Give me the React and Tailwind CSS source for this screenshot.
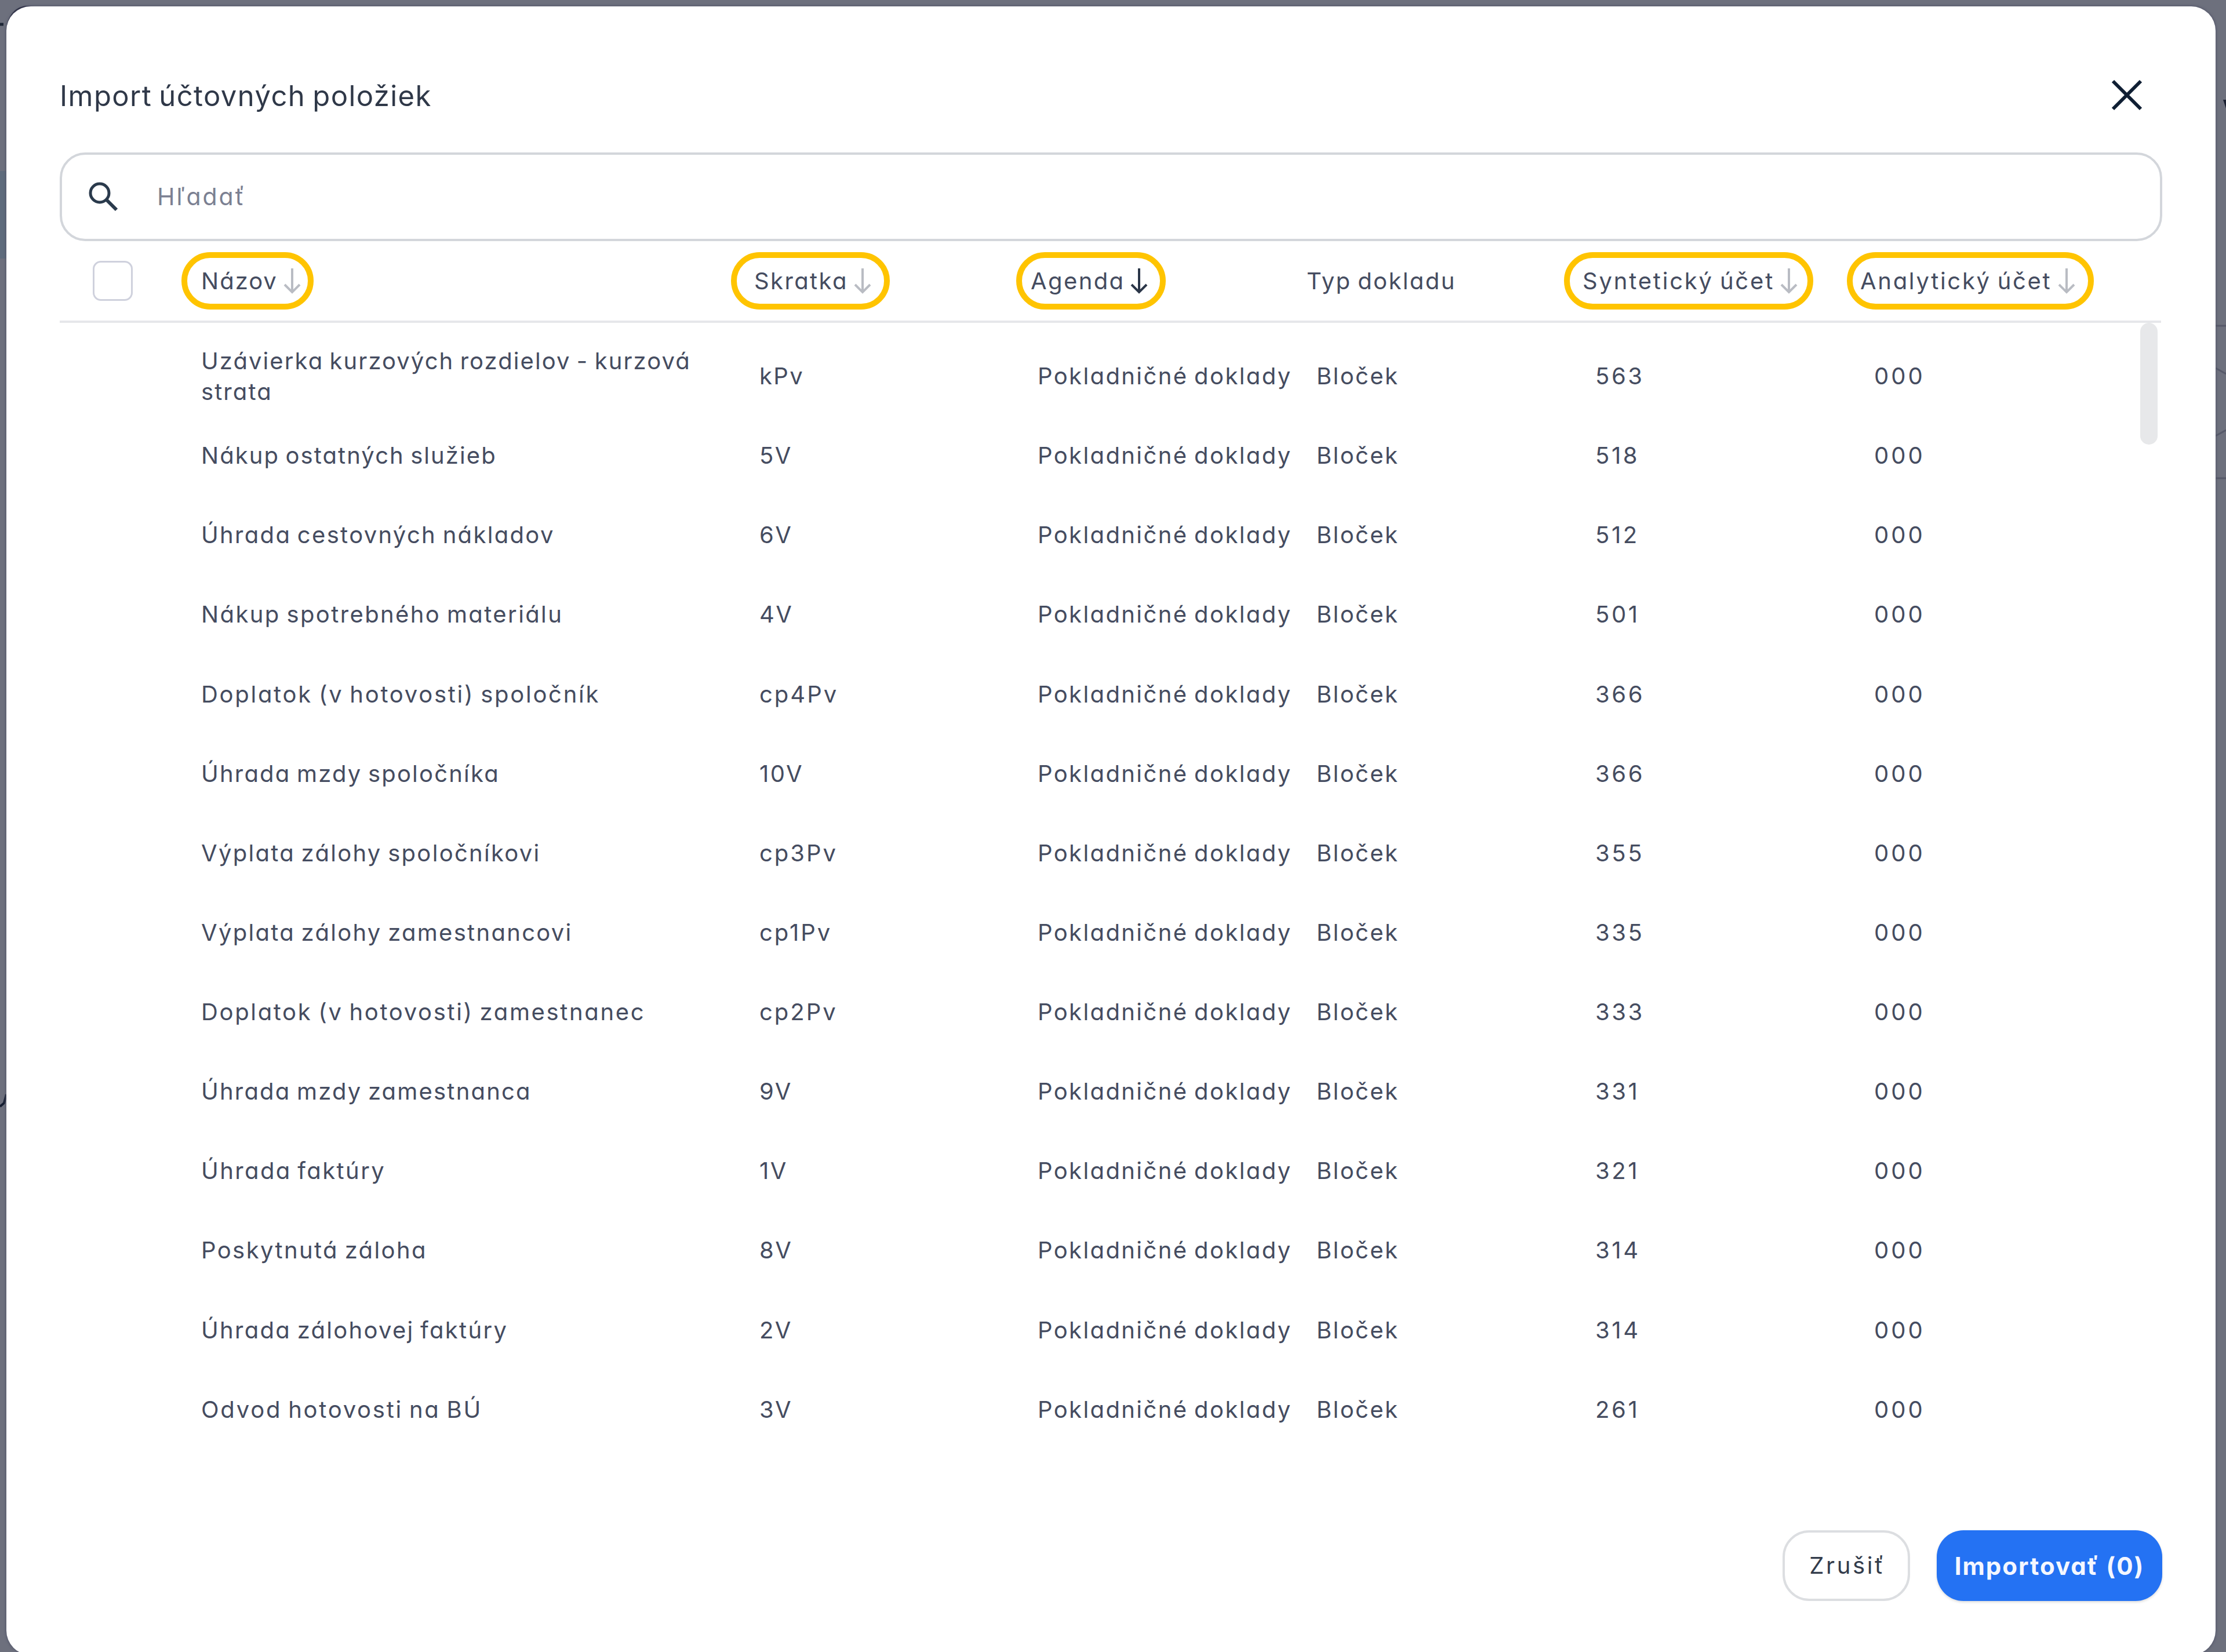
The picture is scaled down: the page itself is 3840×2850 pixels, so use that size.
import React from "react";

const columns = [
  { label: "Názov", pill: true, pos: "ml-[84px] w-[228px] pl-[24px] pr-[11px]", tracking: "tracking-[2px]" },
  { label: "Skratka", pill: true, pos: "ml-[720px] w-[274px] pl-[30px] pr-[21px]", tracking: "tracking-[2.4px]" },
  { label: "Agenda", pill: true, active: true, pos: "ml-[218px] w-[258px] pl-[15px] pr-[20px]", tracking: "tracking-[2.4px]" },
  { label: "Typ dokladu", pos: "ml-[243px] w-[258px]", tracking: "tracking-[2.4px]" },
  { label: "Syntetický účet", pill: true, pos: "ml-[186px] w-[430px] pl-[22px] pr-[16px]", tracking: "tracking-[2.8px]" },
  { label: "Analytický účet", pill: true, pos: "ml-[58px] w-[426px] pl-[13px] pr-[21px]", tracking: "tracking-[2.7px]" },
];

const rows = [
  { name: "Uzávierka kurzových rozdielov - kurzová strata", code: "kPv", account: "563", tracking: "tracking-[2.08px]" },
  { name: "Nákup ostatných služieb", code: "5V", account: "518", tracking: "tracking-[2.08px]" },
  { name: "Úhrada cestovných nákladov", code: "6V", account: "512", tracking: "tracking-[2.33px]" },
  { name: "Nákup spotrebného materiálu", code: "4V", account: "501", tracking: "tracking-[2.4px]" },
  { name: "Doplatok (v hotovosti) spoločník", code: "cp4Pv", account: "366", tracking: "tracking-[2.72px]" },
  { name: "Úhrada mzdy spoločníka", code: "10V", account: "366", tracking: "tracking-[2.2px]" },
  { name: "Výplata zálohy spoločníkovi", code: "cp3Pv", account: "355", tracking: "tracking-[2.3px]" },
  { name: "Výplata zálohy zamestnancovi", code: "cp1Pv", account: "335", tracking: "tracking-[2.3px]" },
  { name: "Doplatok (v hotovosti) zamestnanec", code: "cp2Pv", account: "333", tracking: "tracking-[2.65px]" },
  { name: "Úhrada mzdy zamestnanca", code: "9V", account: "331", tracking: "tracking-[2.2px]" },
  { name: "Úhrada faktúry", code: "1V", account: "321", tracking: "tracking-[2.4px]" },
  { name: "Poskytnutá záloha", code: "8V", account: "314", tracking: "tracking-[2.4px]" },
  { name: "Úhrada zálohovej faktúry", code: "2V", account: "314", tracking: "tracking-[2.3px]" },
  { name: "Odvod hotovosti na BÚ", code: "3V", account: "261", tracking: "tracking-[2.74px]" },
];

function SortArrow({ active }) {
  return (
    <svg
      className={active ? "shrink-0 text-[#2b3648]" : "shrink-0 text-[#b9bcc3]"}
      width="32"
      height="44"
      viewBox="0 0 32 44"
      fill="none"
      stroke="currentColor"
      strokeWidth="4"
    >
      <path d="M16 0V41M3 28L16 41L29 28" />
    </svg>
  );
}

// slivers of the page that stay visible around the dialog
function Backdrop() {
  return (
    <svg className="absolute inset-0" width="3840" height="2850" viewBox="0 0 3840 2850" fill="none">
      <path d="M0 295H11V446H0Z" fill="#5e6b7c" />
      <path d="M12 42C17 24 26 13 44 10L60 11V60H12Z" fill="#1c1d33" />
      <path d="M0 42H6" stroke="#1d2635" strokeWidth="5" />
      <path d="M0 1909L7 1903L11 1888" stroke="#141d30" strokeWidth="4" />
      <path d="M3835 172H3840V187Z" fill="#1b2132" />
      <path d="M3822 562H3840M3822 825H3840M3822 635L3840 645M3822 752L3840 742" stroke="#565969" strokeWidth="3" />
    </svg>
  );
}

function App() {
  return (
    <div className="relative w-[3840px] h-[2850px] overflow-hidden bg-[#6d707d] pt-[11px] pl-[11px] font-['Inter','Liberation_Sans',sans-serif] text-[40px] text-[#454c60] [font-feature-settings:'cv11'] [word-spacing:-3px]">
      <Backdrop />

      {/* dialog */}
      <div className="relative w-[3811px] h-[2844px] bg-white rounded-[42px] shadow-[0_0_4px_1px_#55586c] pl-[92px] pr-[92px] flex flex-col">
        <header className="h-[252px] pt-[58px] flex justify-between items-start">
          <h1 className="mt-[67px] leading-[60px] text-[49px] tracking-[1.4px] [word-spacing:-3px] text-[#2f3848] whitespace-nowrap">Import účtovných položiek</h1>
          <svg className="mt-[66px] mr-[32px]" width="58" height="58" viewBox="0 0 58 58" stroke="#0f1e33" strokeWidth="6">
            <path d="M5 5L53 53M53 5L5 53" />
          </svg>
        </header>

        {/* search */}
        <div className="h-[153px] shrink-0 border-4 border-[#d3d6db] rounded-[44px] flex items-center pl-[44px]">
          <svg width="54" height="54" viewBox="0 0 54 54" fill="none" stroke="#2a3a4c" strokeWidth="5">
            <circle cx="21" cy="20" r="16" />
            <path d="M32 31L50 49" strokeWidth="6" />
          </svg>
          <span className="ml-[66px] text-[41px] text-[#7b8092] tracking-[3px]">Hľadať</span>
        </div>

        {/* table head */}
        <div className="h-[141px] mr-[2px] shrink-0 border-b-4 border-[#e6e7ea] flex items-start pt-[19px] pl-[57px]">
          <div className="mt-[15px] size-[69px] shrink-0 border-[3px] border-[#cfd1dd] rounded-[14px]" />
          {columns.map((col) => (
            <div
              key={col.label}
              className={`${col.pos} ${col.tracking} h-[99px] shrink-0 flex items-center whitespace-nowrap ${col.pill ? "justify-between border-[10px] border-[#ffc400] rounded-full" : ""}`}
            >
              {col.label}
              {col.pill && <SortArrow active={col.active} />}
            </div>
          ))}
        </div>

        {/* table body */}
        <div className="flex justify-between h-[2083px] shrink-0">
          <div className="pt-[23px]">
            {rows.map((row) => (
              <div key={row.code} className="h-[137.14px] flex items-center pl-[244px] tracking-[2.4px] leading-[53px]">
                <span className={`w-[963px] pr-[80px] ${row.tracking}`}>{row.name}</span>
                <span className={row.code.length > 3 ? "w-[480px] tracking-[3px]" : "w-[480px]"}>{row.code}</span>
                <span className="w-[481px] whitespace-nowrap">Pokladničné doklady</span>
                <span className="w-[481px]">Bloček</span>
                <span className="w-[481px] tracking-[3.6px]">{row.account}</span>
                <span className="tracking-[4px]">000</span>
              </div>
            ))}
          </div>
          <div className="w-[30px] h-[210px] mr-[8px] rounded-full bg-[#e7e8ea]" />
        </div>

        <footer className="flex justify-end gap-[46px]">
          <button className="w-[220px] h-[122px] pl-[4px] border-4 border-[#dcdee1] rounded-[46px] tracking-[3.6px] text-[#333c4b]">Zrušiť</button>
          <button className="w-[389px] h-[122px] bg-[#2472f3] rounded-[46px] shadow-[0_2px_4px_#00000026] font-bold text-[42px] tracking-[2px] text-[#f4f7ff] whitespace-nowrap">Importovať (0)</button>
        </footer>
      </div>
    </div>
  );
}

export default App;
